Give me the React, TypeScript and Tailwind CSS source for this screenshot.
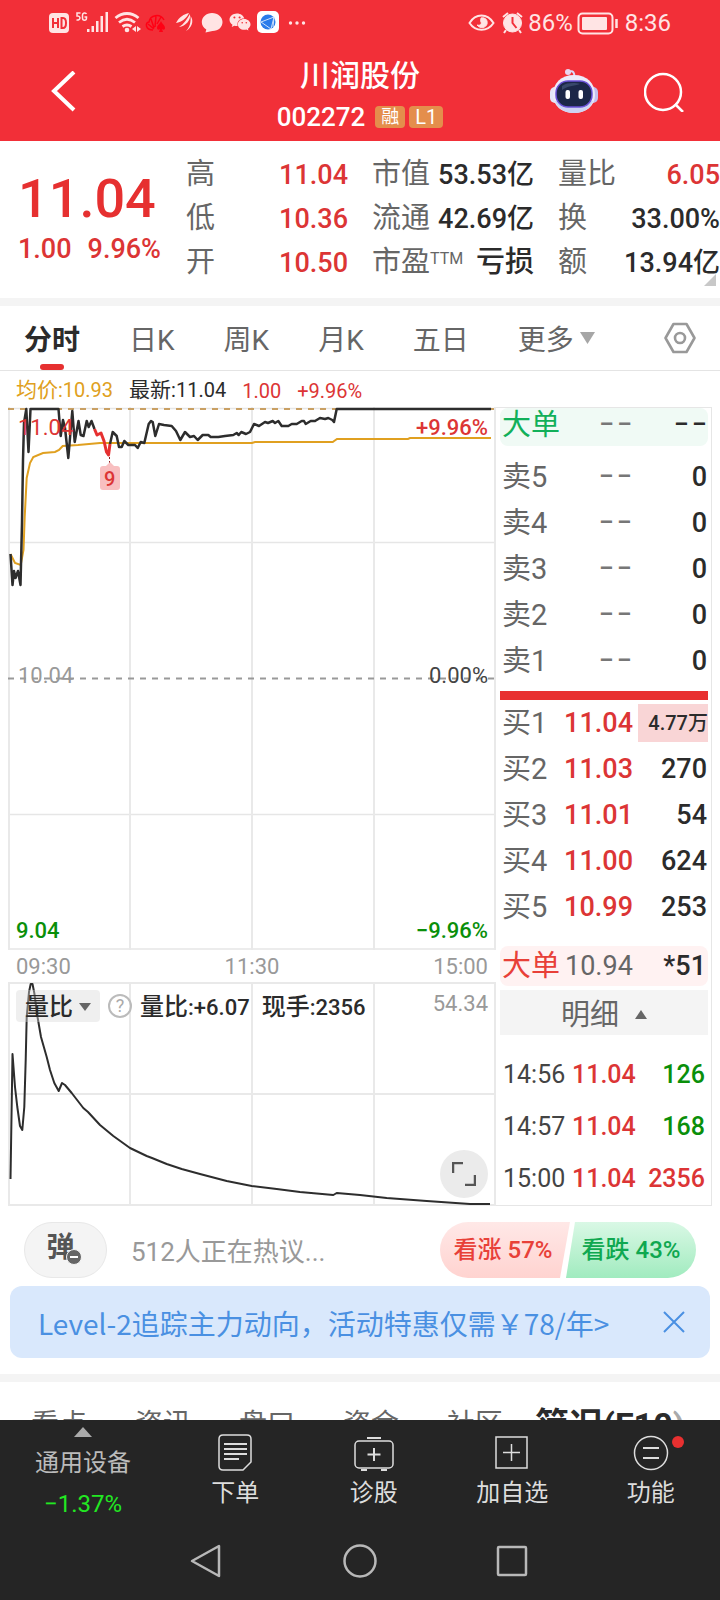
import type { ReactNode } from "react"
import { FaWeixin } from "react-icons/fa"

const RED = "text-[#dc3535]"
const GREEN = "text-[#0a8f0a]"

const sells = ["卖5", "卖4", "卖3", "卖2", "卖1"]

const buys = [
  { label: "买1", price: "11.04", volume: "4.77万", active: true },
  { label: "买2", price: "11.03", volume: "270" },
  { label: "买3", price: "11.01", volume: "54" },
  { label: "买4", price: "11.00", volume: "624" },
  { label: "买5", price: "10.99", volume: "253" },
]

const trades = [
  { time: "14:56", price: "11.04", volume: "126", color: GREEN },
  { time: "14:57", price: "11.04", volume: "168", color: GREEN },
  { time: "15:00", price: "11.04", volume: "2356", color: RED },
]

const PRICE_LINE =
  "10.5,554 12.5,585 14,571 15.5,578 18,571 20.5,585 22,523 23,460 24,423 26.3,409 28.5,452 30.5,409 58.5,409 60.7,436 63,420 65,428 68.3,458 72.3,411 74.7,442 78.5,421 80.7,435 83.5,436 86.7,421 88.7,427 91.5,421 94.5,429"
const PRICE_DROP = "94.5,429 97,435 101,433 104,441 106.5,452 108.5,455 110,444"
const PRICE_REST =
  "110,444 112.7,432 116.7,436 119,447 121.7,447 124.3,441 128.3,445 135,445 137.7,448 140.7,442 144.3,443 148.7,424 151,421 152.7,422 155.3,436 159,424 164,425 171.7,426 176,431 180.3,440 185,432 190,437 194,436 197.7,440 202.7,435 208.3,435 210.7,437 218.3,437 225,436 233.3,435 236.7,433 238.7,435 241.3,432 246,434 250,432 254,424 259,426 265,422 268,423 272.7,421 275,423 278.3,421 281.7,426 288.3,426 291.7,424 296.7,424 301.7,421 304,421 305.7,424 310.7,421 315,421 320,418 325,419 328.3,418 332.3,420 334,422 336.7,409 491,409"
const AVERAGE_LINE =
  "10.5,554 15,563 20.7,565 23.5,550 24.7,517 26.7,478 30,463 33.3,457 43,453 55,452 59,450 62.7,446 78,445 100,443 252,443 255,442 332.7,442 337,439 408,439 410,438 491,438"
const RATIO_LINE =
  "10.5,1179 12.5,1054 15,1087 17.3,1107 20,1126 22.3,1130 24.3,1107 25.7,1060 26.7,1017 29,992 30.7,984 32.5,984 34.3,993 37.7,1018 41,1037 46.7,1057 50,1070 54.3,1083 58.7,1091 62,1083 65,1085 71.7,1093 83.3,1108 88,1112 100,1125 113.3,1136 130,1148 146.7,1156 152,1158 166.7,1164 181.7,1169 200,1174 226.7,1181 251.7,1186 276.7,1189 300,1192 333.3,1195 336.7,1193 360,1195 386.7,1198 426.7,1201 470,1204 490,1204"

function StatusBar() {
  return (
    <div className="flex h-[46px] items-center px-[49px] text-[#ffe4e4]">
      <svg className="h-6 w-[260px] shrink-0" viewBox="49 11 260 24" fill="currentColor">
        <rect x="49" y="13" width="20" height="20" rx="4" />
        <g fill="none" stroke="#f22f38" strokeWidth="2">
          <path d="M53 18v10M53 23h5M58 18v10M61.500 18v10h1.500c4 0 4-10 0-10z" />
        </g>
        <g fill="none" stroke="currentColor" strokeWidth="1.500">
          <path d="M80.500 13h-3.500v3c4-.5 4 4.500-.5 4M86.500 14c-1-2-4-1-4 1v3c0 3 4 3 4 0v-1h-2" />
        </g>
        <path d="M87 29h2.500v3H87zM91.500 26h2.500v6h-2.500zM96 21h2.500v11H96zM100.500 16h2.500v16h-2.500zM105.500 12h2.500v20h-2.500z" />
        <g fill="none" stroke="currentColor" strokeWidth="2.800">
          <path d="M115.500 18c7-6 16-6 23 0M119 22.500c5-4 11-4 16 0M122.500 26.500c3-2 6-2 9 0" />
        </g>
        <circle cx="127" cy="30" r="2.300" />
        <path d="M136 26v6l-4-3zM137 26v6l4-3z" />
        <g fill="none" stroke="#ff0014" strokeWidth="1.500">
          <path d="M153 30c-8 0-8-8-4-8 1-7 11-9 15-2M154 29l-6-5M154 28l-3-9M155 27l1-11M157 24l4-7" />
        </g>
        <path fill="#ff0014" d="M161 21c1 3 4 4 4 7 0 2-2 2-3 1l1 3h-4l1-3c-1 1-3 1-3-1 0-3 3-4 4-7z" />
        <path d="M176 23c3-6 8-9 13-10-2 5-7 9-13 10zM179 27c5-3 8-8 11-13 1 6-4 12-11 13zM186 31c4-4 5-9 4.500-15 4 5 1 12-4.500 15z" />
        <path d="M212 13c6 0 10.500 4 10.500 9s-4 9-10 9l-7 1.500.8-3c-3-2-4.500-4.500-4.500-7.500 0-5 4.500-9 10.200-9z" />
        <FaWeixin x="229" y="11" size={22} />
        <rect x="257" y="11" width="22" height="22" rx="5" fill="#fff" />
        <circle cx="268" cy="22" r="7.500" fill="#2b7bea" />
        <path d="M261 22l13-5-3 12zM274 17l-1 10" fill="none" stroke="#cfe2fb" strokeWidth="1" />
        <circle cx="290.500" cy="23" r="1.700" />
        <circle cx="297" cy="23" r="1.700" />
        <circle cx="303.500" cy="23" r="1.700" />
      </svg>
      <div className="ml-auto flex items-center text-[24px] leading-[28px]">
        <svg className="h-6 w-[56px]" viewBox="468 11 56 24" fill="none" stroke="currentColor">
          <path d="M469.500 23c6-10 18-10 24 0-6 9-18 9-24 0z" strokeWidth="2" />
          <path d="M481 18c4-1 7 2 6 6s-7 5-10 1c3 1 5-1 4-3s0-3 0-4z" fill="currentColor" />
          <circle cx="512.500" cy="23" r="9" fill="currentColor" />
          <path d="M503 17l5-4M522 17l-5-4M506 30l-2 3M519 30l2 3" strokeWidth="2" />
          <path d="M512.500 17v6l4 5" stroke="#f22f38" strokeWidth="2" />
        </svg>
        <span className="ml-1">86%</span>
        <svg className="ml-1 h-6 w-[42px]" viewBox="577 11 42 24" fill="none" stroke="currentColor">
          <rect x="578.500" y="13.500" width="34" height="20" rx="4" strokeWidth="2" />
          <rect x="582" y="17" width="25" height="13" rx="1" fill="currentColor" stroke="none" />
          <path d="M616.500 19v9" strokeWidth="2.500" />
        </svg>
        <span className="ml-1.5">8:36</span>
      </div>
    </div>
  )
}

function Robot() {
  return (
    <svg className="h-[46px] w-12" viewBox="0 0 48 46">
      <path d="M19 3c4-2 6 1 5 5" fill="none" stroke="#dcd6f5" strokeWidth="2" />
      <circle cx="18" cy="3" r="3" fill="#e9d5f0" />
      <rect x="0" y="18" width="10" height="16" rx="5" fill="#e4e6f8" />
      <rect x="38" y="18" width="10" height="16" rx="5" fill="#c3c0ee" />
      <path d="M24 6c13 0 21 8 21 20 0 11-9 18-21 18S3 37 3 26C3 14 11 6 24 6z" fill="#eceafa" />
      <path d="M5 32c3 8 10 12 19 12s16-4 19-12z" fill="#cdd3f3" />
      <rect x="6" y="12" width="36" height="26" rx="12" fill="#1c2748" stroke="#6a52d8" strokeWidth="1.500" />
      <path d="M12 17c6-4 14-3 18-2-6 2-13 2-18 6z" fill="#38486a" />
      <rect x="15.500" y="21" width="4.500" height="9" rx="2" fill="#fff" />
      <rect x="28.500" y="21" width="4.500" height="9" rx="2" fill="#fff" />
    </svg>
  )
}

function Header() {
  return (
    <header className="bg-[#f22f38] text-white">
      <StatusBar />
      <div className="grid h-[95px] grid-cols-[1fr_auto_1fr] items-center pb-1">
        <button className="ml-[50px] w-8" aria-label="返回">
          <svg className="h-[42px] w-7" viewBox="0 0 28 42" fill="none" stroke="currentColor" strokeWidth="4">
            <path d="M24 1L4 20l20 19" />
          </svg>
        </button>
        <div className="flex flex-col items-center pt-1.5">
          <h1 className="text-[30px] font-medium leading-[44px]">川润股份</h1>
          <div className="flex items-center gap-1 leading-[38px]">
            <span className="mr-1.5 text-[26px] font-medium">002272</span>
            <span className="rounded-sm bg-[#e48e4c] px-1.5 text-[18px] leading-[22px]">融</span>
            <span className="rounded-sm bg-[#e48e4c] px-1.5 text-[20px] leading-[22px]">L1</span>
          </div>
        </div>
        <div className="flex items-center justify-end gap-[46px] pr-9">
          <button aria-label="智能助手">
            <Robot />
          </button>
          <button aria-label="搜索">
            <svg className="h-10 w-10" viewBox="0 0 40 40" fill="none" stroke="currentColor" strokeWidth="2.500">
              <circle cx="19" cy="20" r="18" />
              <path d="M31 32l8 8" />
            </svg>
          </button>
        </div>
      </div>
    </header>
  )
}

function Quote({ label, children, color = "text-[#2b2b2b]" }: { label: ReactNode; children: ReactNode; color?: string }) {
  return (
    <div className="flex h-11 items-center justify-between whitespace-nowrap">
      <dt className="text-[29px] text-[#666]">{label}</dt>
      <dd className={`font-medium ${color}`}>{children}</dd>
    </div>
  )
}

function Summary() {
  return (
    <section className="flex h-[157px] pt-3 text-[27px]">
      <div className="w-[186px] shrink-0 pl-[18px] font-medium text-[#e63030]">
        <div className="pt-4 text-[54px] leading-[60px]">11.04</div>
        <div className="flex gap-4 text-[#dc3535]">
          <span>1.00</span>
          <span>9.96%</span>
        </div>
      </div>
      <dl className="grid flex-1 grid-cols-3 gap-x-6">
        <div>
          <Quote label="高" color={RED}>11.04</Quote>
          <Quote label="低" color={RED}>10.36</Quote>
          <Quote label="开" color={RED}>10.50</Quote>
        </div>
        <div>
          <Quote label="市值">53.53亿</Quote>
          <Quote label="流通">42.69亿</Quote>
          <Quote
            label={
              <>
                市盈<sup className="top-[-8px] text-[16px]">TTM</sup>
              </>
            }
          >
            <span className="text-[29px]">亏损</span>
          </Quote>
        </div>
        <div className="relative">
          <Quote label="量比" color={RED}>6.05</Quote>
          <Quote label="换">33.00%</Quote>
          <Quote label="额">13.94亿</Quote>
          <svg className="absolute bottom-3 right-1 h-3 w-3" viewBox="0 0 12 12" fill="#c8c8c8">
            <path d="M12 0v12H0z" />
          </svg>
        </div>
      </dl>
    </section>
  )
}

function PeriodTabs() {
  return (
    <nav className="flex h-[65px] items-center gap-[49px] whitespace-nowrap border-b border-[#e4e4e4] px-6 text-[28px] text-[#666]">
      <button className="relative h-16 pt-1.5 font-bold text-[#2b2b2b]">
        分时
        <span className="absolute bottom-0 left-4 h-1.5 w-6 rounded-full bg-[#e63030]" />
      </button>
      <button className="pt-1.5">日K</button>
      <button className="pt-1.5">周K</button>
      <button className="pt-1.5">月K</button>
      <button className="pt-1.5">五日</button>
      <button className="flex items-center gap-1.5">
        <span className="pt-1.5">更多</span>
        <svg className="h-3 w-[15px]" viewBox="0 0 15 12" fill="#a6a6a6">
          <path d="M0 0h15L7.500 12z" />
        </svg>
      </button>
      <button className="ml-auto" aria-label="设置">
        <svg className="h-8 w-8" viewBox="0 0 32 32" fill="none" stroke="#999" strokeWidth="2.600">
          <path d="M9.500 2h13L30.500 16l-8 14h-13L1.500 16z" strokeLinejoin="round" />
          <circle cx="16" cy="16" r="5" />
        </svg>
      </button>
    </nav>
  )
}

function PriceChart() {
  return (
    <div className="relative text-[22px] leading-[26px]">
      <svg className="block h-[543px] w-full" viewBox="8 407 488 543" preserveAspectRatio="none" fill="none">
        <path d="M8 408.500H495M8 542.500H495M8 814.500H495M8 949H495" stroke="#e6e6e6" strokeWidth="1.500" />
        <path d="M9 407V950M130 407V950M252 407V950M374 407V950M495 407V950" stroke="#e9e9e9" strokeWidth="2" />
        <path d="M8 409H495" stroke="#c9a063" strokeWidth="2" strokeDasharray="6 6" />
        <path d="M8 678.500H495" stroke="#999" strokeWidth="2" strokeDasharray="6 6" />
        <polyline points={AVERAGE_LINE} stroke="#e0a020" strokeWidth="2" />
        <g strokeWidth="2.500" strokeLinejoin="round">
          <polyline points={PRICE_LINE} stroke="#2d2d2d" />
          <polyline points={PRICE_REST} stroke="#2d2d2d" />
          <polyline points={PRICE_DROP} stroke="#e63030" strokeWidth="3" />
        </g>
        <path d="M109.500 457v6" stroke="#8a2020" strokeDasharray="2 2" />
        <path d="M103 466l3 0 4-4 4 4h3c2 0 3 1 3 3v18c0 2-1 3-3 3h-14c-2 0-3-1-3-3v-18c0-2 1-3 3-3z" fill="#f8bfc0" />
      </svg>
      <span className={`absolute left-2.5 top-2 ${RED}`}>11.04</span>
      <span className={`absolute left-[96px] top-[59px] text-[20px] font-medium ${RED}`}>9</span>
      <span className={`absolute right-2 top-2 font-medium ${RED}`}>+9.96%</span>
      <span className="absolute left-2.5 top-[256px] text-[#999]">10.04</span>
      <span className="absolute right-2 top-[256px] text-[#444]">0.00%</span>
      <span className={`absolute bottom-1.5 left-2 font-medium ${GREEN}`}>9.04</span>
      <span className={`absolute bottom-1.5 right-2 font-medium ${GREEN}`}>−9.96%</span>
    </div>
  )
}

function RatioChart() {
  return (
    <div className="relative text-[22px] font-medium leading-[28px] text-[#2b2b2b]">
      <svg className="block h-[224px] w-full" viewBox="8 982 488 224" preserveAspectRatio="none" fill="none">
        <path d="M8 983H495M8 1094H495M8 1205H495" stroke="#e9e9e9" strokeWidth="2" />
        <path d="M9 982V1206M130 982V1206M252 982V1206M374 982V1206M495 982V1206" stroke="#e9e9e9" strokeWidth="2" />
        <polyline points={RATIO_LINE} stroke="#2d2d2d" strokeWidth="2" strokeLinejoin="round" />
      </svg>
      <div className="absolute inset-x-2 top-2 flex items-start">
        <button className="flex h-8 w-[84px] items-center justify-center gap-1.5 rounded bg-[#d8d8d8]/40 pt-0.5 text-[24px]">
          量比
          <svg className="h-2 w-3" viewBox="0 0 12 8" fill="#666">
            <path d="M0 0h12L6 8z" />
          </svg>
        </button>
        <button
          className="ml-2 mt-1 h-6 w-6 rounded-full border-2 border-[#bbb] text-[18px] font-normal leading-[20px] text-[#aaa]"
          aria-label="说明"
        >
          ?
        </button>
        <span className="ml-2 mt-[3px]">
          <span className="text-[24px]">量比</span>:+6.07
        </span>
        <span className="ml-3 mt-[3px]">
          <span className="text-[24px]">现手</span>:2356
        </span>
        <span className="ml-auto font-normal text-[#999]">54.34</span>
      </div>
      <button
        className="absolute bottom-2 right-2 flex h-12 w-12 items-center justify-center rounded-full bg-[#ebebeb]"
        aria-label="全屏"
      >
        <svg className="h-6 w-6" viewBox="0 0 24 24" fill="none" stroke="#555" strokeWidth="2.500">
          <path d="M1 11V1h10M23 13v10H13" />
        </svg>
      </button>
    </div>
  )
}

function Dashes({ className }: { className: string }) {
  return (
    <span className={`flex justify-end gap-1 text-[22px] font-bold ${className}`}>
      <span>–</span>
      <span>–</span>
    </span>
  )
}

function OrderBook() {
  return (
    <aside className="w-[216px] shrink-0 border border-l-0 border-[#e6e6e6] pl-1 pr-[3px] text-[27px] leading-[38px]">
      <div className="flex h-[38px] items-center rounded-lg bg-[#f0faf5] pb-1 pl-0.5 pr-0.5">
        <span className="text-[29px] text-[#12b05a]">大单</span>
        <Dashes className="ml-auto mr-[43px] text-[#777]" />
        <Dashes className="text-[#2b2b2b]" />
      </div>
      <table className="mt-2 w-full">
        <tbody>
          {sells.map((label) => (
            <tr key={label} className="h-[46px]">
              <th scope="row" className="w-[60px] p-0 pl-0.5 text-left text-[29px] font-normal text-[#666]">{label}</th>
              <td className="p-0 pr-1">
                <Dashes className="text-[#777]" />
              </td>
              <td className="w-[73px] p-0 pr-px text-right font-medium text-[#2b2b2b]">0</td>
            </tr>
          ))}
        </tbody>
      </table>
      <div className="mt-[7px] h-[9px] bg-[#e83030]" />
      <table className="w-full">
        <tbody>
          {buys.map((row) => (
            <tr key={row.label} className="h-[46px]">
              <th scope="row" className="w-[60px] p-0 pl-0.5 text-left text-[29px] font-normal text-[#666]">{row.label}</th>
              <td className={`p-0 pr-0.5 text-right font-medium ${RED}`}>{row.price}</td>
              <td className="w-[73px] p-0 text-right font-medium text-[#2b2b2b]">
                <div className={row.active ? "ml-[3px] bg-[#f9d5d6] text-[20px]" : "pr-px"}>{row.volume}</div>
              </td>
            </tr>
          ))}
        </tbody>
      </table>
      <div className="mt-4 flex h-10 items-center rounded-lg bg-[#fff2f2] pl-0.5 pr-0.5">
        <span className="text-[29px] text-[#e84038]">大单</span>
        <span className="ml-[5px] text-[#666]">10.94</span>
        <span className="ml-auto font-medium text-[#2b2b2b]">*51</span>
      </div>
      <button className="mt-1 flex h-[45px] w-full items-center justify-center gap-4 bg-[#f4f4f4] pt-1 text-[29px] text-[#666]">
        明细
        <svg className="h-[9px] w-3" viewBox="0 0 12 9" fill="#666">
          <path d="M6 0l6 9H0z" />
        </svg>
      </button>
      <table className="mt-[14px] w-full text-[25px] font-medium">
        <tbody>
          {trades.map((t) => (
            <tr key={t.time} className="h-[52px]">
              <td className="w-[72px] p-0 pl-[3px] font-normal text-[#444]">{t.time}</td>
              <td className={`p-0 ${RED}`}>{t.price}</td>
              <td className={`p-0 pr-[3px] text-right ${t.color}`}>{t.volume}</td>
            </tr>
          ))}
        </tbody>
      </table>
    </aside>
  )
}

function Discussion() {
  return (
    <section className="flex h-[80px] items-center px-6 pt-2">
      <button className="relative h-14 w-[83px] rounded-full border border-[#e8e8e8] bg-[#f4f4f4] pb-1 pr-2.5 text-[28px] font-bold leading-[48px] text-[#555]">
        弹
        <svg className="absolute left-[41px] top-[26px] h-4 w-4" viewBox="0 0 16 16">
          <circle cx="8" cy="8" r="7.500" fill="#666" stroke="#f4f4f4" />
          <path d="M4 8h8" stroke="#fff" strokeWidth="2" />
        </svg>
      </button>
      <a href="#talk" className="ml-6 pt-1 text-[26px] text-[#999]">
        512人正在热议...
      </a>
      <div className="ml-auto flex text-[24px] font-medium">
        <button className="h-14 w-[130px] rounded-l-full bg-linear-to-b from-[#ffe8e7] to-[#ffd3d0] pr-1 text-[#e84038] [clip-path:polygon(0_0,100%_0,calc(100%-10px)_100%,0_100%)]">
          看涨 57%
        </button>
        <button className="-ml-1 h-14 w-[130px] rounded-r-full bg-linear-to-b from-[#d9f8e5] to-[#a0ebbf] text-[#0fa850] [clip-path:polygon(9px_0,100%_0,100%_100%,0_100%)]">
          看跌 43%
        </button>
      </div>
    </section>
  )
}

function Promo() {
  return (
    <div className="mx-2.5 flex h-[72px] items-center justify-between rounded-xl bg-[#d9e8fc] pl-7 pr-[25px] text-[#4a90e2]">
      <a href="#level2" className="whitespace-nowrap pt-0.5 font-['Noto_Sans_CJK_SC',sans-serif] text-[28px]">
        Level-2追踪主力动向，活动特惠仅需￥78/年&gt;
      </a>
      <button aria-label="关闭">
        <svg className="h-[22px] w-[22px]" viewBox="0 0 22 22" fill="none" stroke="currentColor" strokeWidth="2">
          <path d="M1 1l20 20M21 1L1 21" />
        </svg>
      </button>
    </div>
  )
}

function InfoTabs() {
  return (
    <nav className="flex h-[38px] items-start gap-12 overflow-hidden whitespace-nowrap pl-[31px] text-[28px] leading-[86px] text-[#666]">
      <button>看点</button>
      <button>资讯</button>
      <button>盘口</button>
      <button>资金</button>
      <button>社区</button>
      <button className="-ml-4 text-[34px] font-bold text-[#2b2b2b]">
        简况(F10<span className="text-[#aaa]">)</span>
      </button>
    </nav>
  )
}

function BottomItem({ label, children }: { label: string; children: ReactNode }) {
  return (
    <button className="relative flex flex-col items-center pt-3.5 text-[#ddd]">
      <svg className="h-9 w-9 overflow-visible" viewBox="0 0 36 36" fill="none" stroke="#ddd" strokeWidth="1.500">
        {children}
      </svg>
      <span className="mt-1.5 leading-[34px]">{label}</span>
    </button>
  )
}

function BottomBar() {
  return (
    <footer className="bg-[#252525] text-[24px]">
      <div className="grid h-[100px] grid-cols-[166px_1fr_1fr_1fr_1fr]">
        <button className="flex flex-col items-center pt-[7px] text-[#bbb]">
          <svg className="h-2.5 w-[18px]" viewBox="0 0 18 10" fill="#aaa">
            <path d="M9 0l9 10H0z" />
          </svg>
          <span className="mt-[9px] leading-[34px]">通用设备</span>
          <span className="mt-1.5 leading-[36px] text-[#22e822]">−1.37%</span>
        </button>
        <BottomItem label="下单">
          <path d="M6 1h24c3 0 4 1 4 4v23l-8 8H6c-3 0-4-1-4-4V5c0-3 1-4 4-4z" />
          <path d="M7 10h23M7 15h23M7 20h23M7 25h15" strokeWidth="2" />
        </BottomItem>
        <BottomItem label="诊股">
          <rect x="-1" y="7" width="38" height="27" rx="4" />
          <path d="M11 4h14M5 36h6M25 36h6" strokeWidth="2" />
          <path d="M11.500 20.500h13M18 14v13" strokeWidth="2" />
        </BottomItem>
        <BottomItem label="加自选">
          <rect x="2" y="3" width="31" height="31" />
          <path d="M9 18.500h17M17.500 10v17" />
        </BottomItem>
        <BottomItem label="功能">
          <circle cx="18" cy="19" r="16.500" />
          <path d="M10 14h16M10 24h16" strokeWidth="2" />
          <circle cx="45" cy="8" r="6" fill="#e83030" stroke="none" />
        </BottomItem>
      </div>
      <div className="flex h-[80px] justify-center">
        <button className="flex w-[153px] items-center justify-center" aria-label="后退">
          <svg className="h-9 w-9" viewBox="0 0 36 36" fill="none" stroke="#b8b8b8" strokeWidth="2.500" strokeLinejoin="round">
            <path d="M30 4v30L3 19z" />
          </svg>
        </button>
        <button className="flex w-[153px] items-center justify-center" aria-label="主屏幕">
          <svg className="h-9 w-9" viewBox="0 0 36 36" fill="none" stroke="#b8b8b8" strokeWidth="2.500">
            <circle cx="18" cy="19" r="15.500" />
          </svg>
        </button>
        <button className="flex w-[153px] items-center justify-center" aria-label="最近任务">
          <svg className="h-9 w-9" viewBox="0 0 36 36" fill="none" stroke="#b8b8b8" strokeWidth="2.500">
            <rect x="3" y="5" width="28" height="28" rx="1" />
          </svg>
        </button>
      </div>
    </footer>
  )
}

export default function App() {
  return (
    <div className="min-h-screen overflow-hidden bg-white font-['Roboto','Noto_Sans_CJK_SC',sans-serif]">
      <Header />
      <main>
        <Summary />
        <div className="h-2 bg-[#f4f4f4]" />
        <PeriodTabs />
        <div className="flex h-9 items-center gap-4 pl-4 pt-1 text-[20px]">
          <span className="text-[#e0a020]">
            <span className="text-[21px]">均价</span>:10.93
          </span>
          <span className="text-[#2b2b2b]">
            <span className="text-[21px]">最新</span>:11.04
          </span>
          <span className={RED}>1.00</span>
          <span className={RED}>+9.96%</span>
        </div>
        <div className="flex px-2">
          <div className="min-w-0 flex-1">
            <PriceChart />
            <div className="grid h-8 grid-cols-3 items-center px-2 text-[22px] text-[#999]">
              <span>09:30</span>
              <span className="text-center">11:30</span>
              <span className="text-right">15:00</span>
            </div>
            <RatioChart />
          </div>
          <OrderBook />
        </div>
        <Discussion />
        <Promo />
        <div className="mt-4 h-2 bg-[#f4f4f4]" />
        <InfoTabs />
      </main>
      <BottomBar />
    </div>
  )
}
